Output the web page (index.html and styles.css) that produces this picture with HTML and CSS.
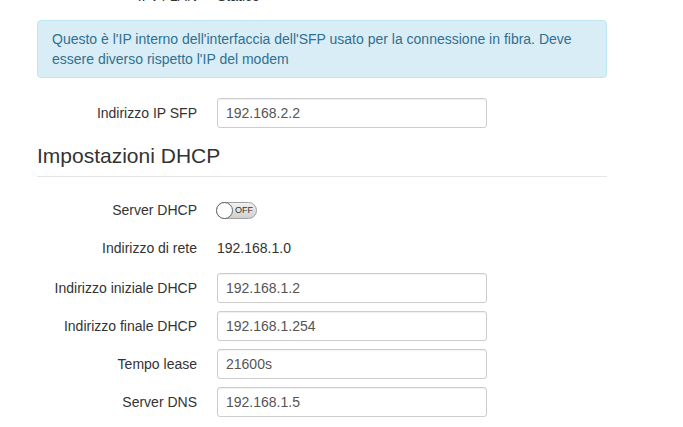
FILE: index.html
```html
<!DOCTYPE html>
<html lang="it">
<head>
<meta charset="utf-8">
<title>Impostazioni</title>
<link rel="stylesheet" href="styles.css">
</head>
<body>
<div class="page">
  <div class="row row-top">
    <label class="label">IPv4 LAN</label>
    <div class="control"><span class="static">Statico</span></div>
  </div>

  <div class="alert">Questo è l'IP interno dell'interfaccia dell'SFP usato per la connessione in fibra. Deve essere diverso rispetto l'IP del modem</div>

  <div class="row row-sfp">
    <label class="label">Indirizzo IP SFP</label>
    <div class="control"><input class="input" type="text" value="192.168.2.2"></div>
  </div>

  <h3 class="section-title">Impostazioni DHCP</h3>
  <div class="divider"></div>

  <div class="rows">
    <div class="row">
      <label class="label">Server DHCP</label>
      <div class="control">
        <span class="toggle"><span class="knob"></span><span class="toggle-text">OFF</span></span>
      </div>
    </div>
    <div class="row row-static">
      <label class="label">Indirizzo di rete</label>
      <div class="control"><span class="static">192.168.1.0</span></div>
    </div>
    <div class="row">
      <label class="label">Indirizzo iniziale DHCP</label>
      <div class="control"><input class="input" type="text" value="192.168.1.2"></div>
    </div>
    <div class="row">
      <label class="label">Indirizzo finale DHCP</label>
      <div class="control"><input class="input" type="text" value="192.168.1.254"></div>
    </div>
    <div class="row">
      <label class="label">Tempo lease</label>
      <div class="control"><input class="input" type="text" value="21600s"></div>
    </div>
    <div class="row">
      <label class="label">Server DNS</label>
      <div class="control"><input class="input" type="text" value="192.168.1.5"></div>
    </div>
  </div>
</div>
</body>
</html>
```

FILE: styles.css
```css
html, body {
  margin: 0;
  padding: 0;
  background: #fff;
}
body {
  font-family: "Liberation Sans", Arial, sans-serif;
  font-size: 14px;
  color: #333;
  overflow: hidden;
}
.page {
  width: 570px;
  padding-left: 37px;
}
.row {
  display: flex;
  align-items: center;
  height: 30px;
}
.label {
  width: 160px;
  flex: none;
  text-align: right;
  margin-right: 20px;
  line-height: 20px;
}
.control {
  display: flex;
  align-items: center;
}
.row-top {
  margin-top: -19px;
}
.alert {
  margin-top: 9px;
  background: #d9edf7;
  border: 1px solid #bce8f1;
  border-radius: 4px;
  color: #31708f;
  padding: 8px 10px 8px 14px;
  line-height: 20px;
}
.row-sfp {
  margin-top: 20px;
}
.input {
  box-sizing: border-box;
  width: 270px;
  height: 30px;
  border: 1px solid #ccc;
  border-radius: 3px;
  padding: 0 8px;
  font-family: "Liberation Sans", Arial, sans-serif;
  font-size: 14px;
  color: #555;
  background: #fff;
  box-shadow: inset 0 1px 1px rgba(0,0,0,0.06);
  outline: none;
}
.section-title {
  margin: 16px 0 0 0;
  font-size: 21px;
  font-weight: normal;
  line-height: 24px;
  color: #333;
}
.divider {
  margin-top: 8px;
  height: 1px;
  background: #e5e5e5;
}
.rows {
  margin-top: 18px;
  display: flex;
  flex-direction: column;
  gap: 8px;
}
.row-static {
  margin-bottom: 2px;
}
.toggle {
  display: flex;
  align-items: center;
  box-sizing: border-box;
  width: 41px;
  height: 17px;
  border: 1px solid #a0a0a0;
  border-radius: 9px;
  background: linear-gradient(#f2f2f2, #cfcfcf);
  margin-left: -1px;
}
.knob {
  box-sizing: border-box;
  width: 17px;
  height: 17px;
  margin-left: -1px;
  border-radius: 50%;
  background: #fff;
  border: 1px solid #666;
  flex: none;
}
.toggle-text {
  font-size: 9px;
  line-height: 10px;
  color: #333;
  margin-left: 2px;
}
```
